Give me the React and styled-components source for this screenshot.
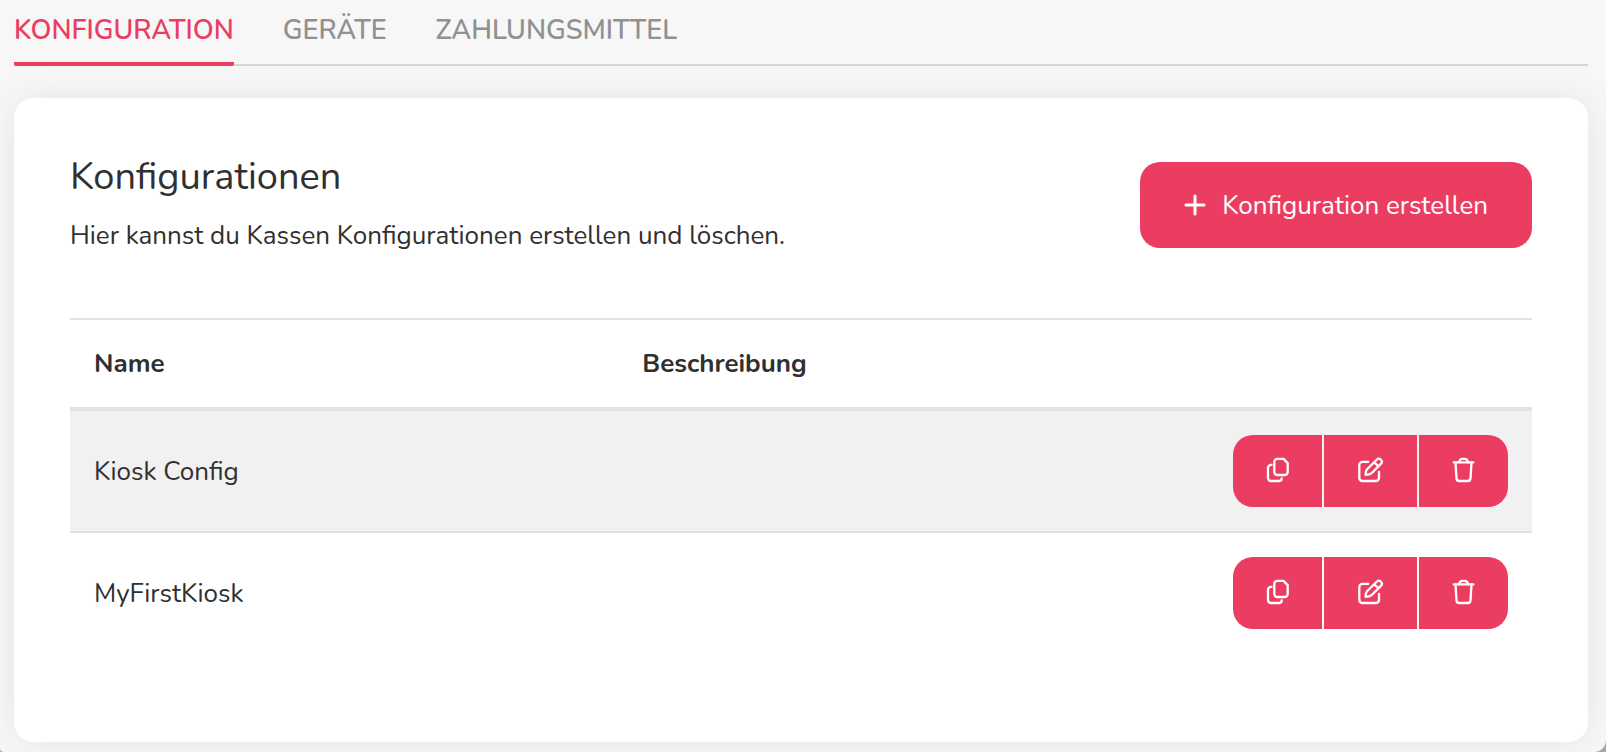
import React from 'react';
import styled, { createGlobalStyle } from 'styled-components';

const GlobalStyle = createGlobalStyle`
  *, *::before, *::after {
    box-sizing: border-box;
  }
  body {
    margin: 0;
    background-color: #a6a6a6;
    color: #303030;
    font-family: Nunito, Lato, sans-serif;
    font-size: 26px;
    line-height: 39px;
  }
`;

const Page = styled.main`
  min-height: 100vh;
  padding: 11px 18px 10px 14px;
  border-radius: 0 0 12px 4px;
  background-color: #f7f7f7;
`;

const Tabs = styled.nav`
  display: flex;
  gap: 49px;
  border-bottom: 2px solid #d6d6d6;
`;

const Tab = styled.a`
  margin-bottom: -2px;
  padding-bottom: 12px;
  border-bottom: 4px solid ${props => (props.$active ? '#eb3d62' : 'transparent')};
  border-radius: 2px;
  color: ${props => (props.$active ? '#eb3d62' : '#919191')};
  font-size: 27px;
  font-weight: 600;
  text-decoration: none;
  text-transform: uppercase;
`;

const Card = styled.section`
  margin-top: 32px;
  padding: 56px 56px 89px;
  border-radius: 20px;
  background-color: #fff;
  box-shadow: 0 0 36px rgba(0, 0, 0, 0.08);
`;

const CardHeader = styled.header`
  display: flex;
  justify-content: space-between;
  align-items: center;
  margin-bottom: 63px;
`;

const Title = styled.h1`
  margin: 0 0 16px;
  font-size: 38px;
  font-weight: 400;
  line-height: 46px;
`;

const Text = styled.p`
  margin: 0;
`;

const CreateButton = styled.button`
  display: flex;
  align-items: center;
  gap: 16px;
  padding: 24px 44px 23px;
  border: 0;
  border-radius: 20px;
  background-color: #eb3d62;
  color: #fff;
  font: inherit;
  cursor: pointer;
`;

const Table = styled.table`
  width: 100%;
  border-collapse: separate;
  border-spacing: 0;
  table-layout: fixed;
`;

const HeadCell = styled.th`
  padding: 24px;
  border-top: 2px solid #dee2e6;
  border-bottom: 4px solid #dfe1e7;
  font-weight: 700;
  text-align: left;
`;

const Row = styled.tr`
  &:nth-child(odd) {
    background-color: #f1f1f1;
  }
  &:not(:last-child) td {
    border-bottom: 2px solid #dee2e6;
  }
`;

const Cell = styled.td`
  padding: 24px;
`;

const Actions = styled.div`
  display: flex;
  justify-content: flex-end;
  gap: 2px;
`;

const ActionButton = styled.button`
  display: flex;
  align-items: center;
  justify-content: center;
  height: 72px;
  padding: 0 32px;
  border: 0;
  background-color: #eb3d62;
  color: #fff;
  cursor: pointer;
  &:first-child {
    border-radius: 20px 0 0 20px;
  }
  &:last-child {
    border-radius: 0 20px 20px 0;
  }
`;

const Icon = styled.svg`
  display: block;
  fill: none;
  stroke: currentColor;
  stroke-linecap: round;
  stroke-linejoin: round;
`;

const PlusIcon = () => (
  <Icon width="22" height="22" viewBox="0 0 22 22" strokeWidth="3" aria-hidden="true">
    <path d="M11 2v18M2 11h18" />
  </Icon>
);

const CopyIcon = () => (
  <Icon width="25" height="28" viewBox="0 0 25 28" strokeWidth="2.3" aria-hidden="true">
    <path d="M12.3 1.9h6.200l4.200 4.200v8.900a3 3 0 0 1-3 3h-7.400a3 3 0 0 1-3-3V4.900a3 3 0 0 1 3-3z" />
    <path d="M6.500 7.900H6a3 3 0 0 0-3 3V21a3 3 0 0 0 3 3h8a2.700 2.700 0 0 0 2.700-2.700" />
  </Icon>
);

const EditIcon = () => (
  <Icon width="29" height="28" viewBox="0 0 29 28" strokeWidth="2.3" aria-hidden="true">
    <path d="M12.300 4.800H6.500a3.200 3.200 0 0 0-3.200 3.200v12.800A3.200 3.200 0 0 0 6.500 24h13.300a3.200 3.200 0 0 0 3.200-3.200v-6" />
    <path d="M9.500 17.800c0-2.500.5-4.500 1.800-5.800l9.400-9.300a2.900 2.900 0 0 1 4.200 4.200l-9.400 9.300c-1.400 1.300-3.500 1.600-6 1.600zM18.200 5.200l4.200 4.200" />
  </Icon>
);

const TrashIcon = () => (
  <Icon width="25" height="28" viewBox="0 0 25 28" strokeWidth="2.3" aria-hidden="true">
    <path d="M2.700 5.400h19.700" />
    <path d="M7.800 5.200l1.200-2.200a2.200 2.200 0 0 1 1.900-1.100h3.300a2.200 2.200 0 0 1 1.900 1.100l1.200 2.200" />
    <path d="M4.500 5.600l1 15.800a2.700 2.700 0 0 0 2.700 2.600h8.600a2.700 2.700 0 0 0 2.700-2.600l1-15.800" />
  </Icon>
);

const tabs = ['Konfiguration', 'Geräte', 'Zahlungsmittel'];

const configurations = [
  { name: 'Kiosk Config', description: '' },
  { name: 'MyFirstKiosk', description: '' },
];

const ConfigurationRow = ({ name, description }) => (
  <Row>
    <Cell>{name}</Cell>
    <Cell>{description}</Cell>
    <Cell>
      <Actions>
        <ActionButton type="button" aria-label={`${name} kopieren`}><CopyIcon /></ActionButton>
        <ActionButton type="button" aria-label={`${name} bearbeiten`}><EditIcon /></ActionButton>
        <ActionButton type="button" aria-label={`${name} löschen`}><TrashIcon /></ActionButton>
      </Actions>
    </Cell>
  </Row>
);

const App = () => (
  <>
    <GlobalStyle />
    <Page>
      <Tabs>
        {tabs.map((tab, index) => (
          <Tab key={tab} href={`#${tab.toLowerCase()}`} $active={index === 0}>{tab}</Tab>
        ))}
      </Tabs>
      <Card>
        <CardHeader>
          <div>
            <Title>Konfigurationen</Title>
            <Text>Hier kannst du Kassen Konfigurationen erstellen und löschen.</Text>
          </div>
          <CreateButton type="button">
            <PlusIcon />
            Konfiguration erstellen
          </CreateButton>
        </CardHeader>
        <Table>
          <colgroup>
            <col width="37.5%" />
            <col />
            <col />
          </colgroup>
          <thead>
            <tr>
              <HeadCell scope="col">Name</HeadCell>
              <HeadCell scope="col">Beschreibung</HeadCell>
              <HeadCell scope="col" aria-label="Aktionen" />
            </tr>
          </thead>
          <tbody>
            {configurations.map(item => (
              <ConfigurationRow key={item.name} {...item} />
            ))}
          </tbody>
        </Table>
      </Card>
    </Page>
  </>
);

export default App;
